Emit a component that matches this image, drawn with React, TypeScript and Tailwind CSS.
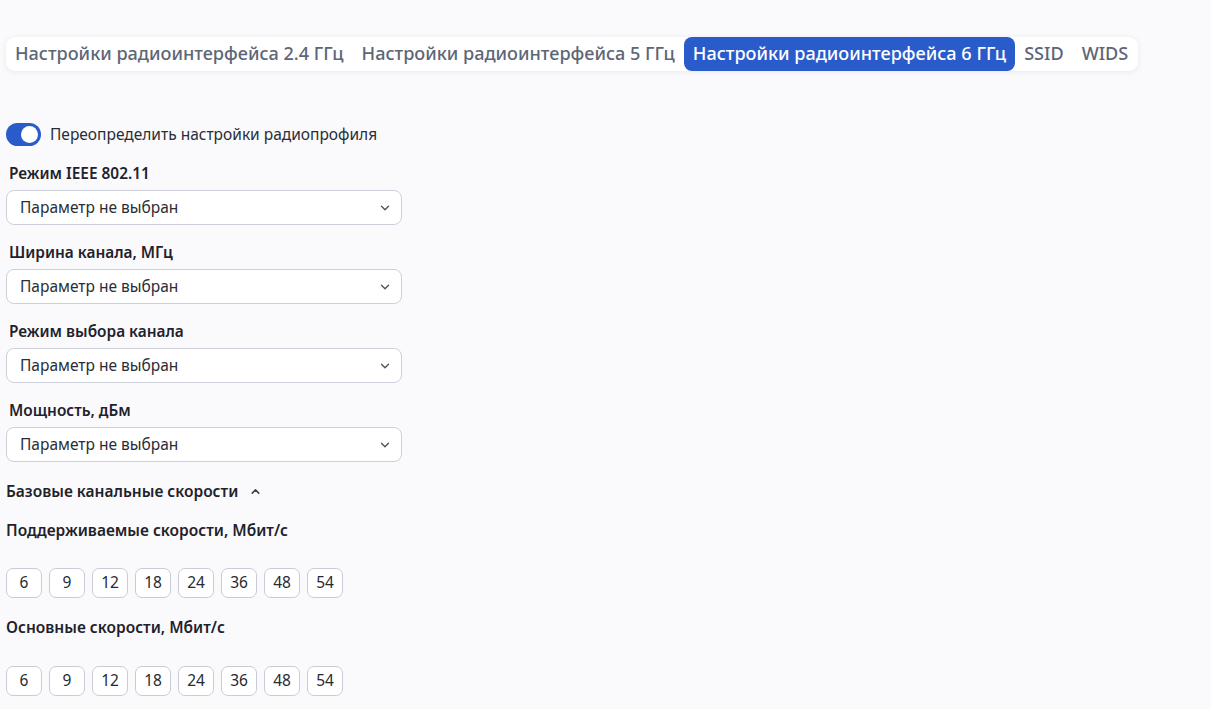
import React from "react";

const tabs = [
  "Настройки радиоинтерфейса 2.4 ГГц",
  "Настройки радиоинтерфейса 5 ГГц",
  "Настройки радиоинтерфейса 6 ГГц",
  "SSID",
  "WIDS",
];

const selects = [
  "Режим IEEE 802.11",
  "Ширина канала, МГц",
  "Режим выбора канала",
  "Мощность, дБм",
];

const rates = [6, 9, 12, 18, 24, 36, 48, 54];

function ChevronDown() {
  return (
    <svg width="14" height="14" viewBox="0 0 24 24" fill="none" stroke="#4b5563" strokeWidth="2.4" strokeLinecap="round" strokeLinejoin="round">
      <path d="M6 9l6 6 6-6" />
    </svg>
  );
}

function ChevronUp() {
  return (
    <svg width="13" height="13" viewBox="0 0 24 24" fill="none" stroke="#374151" strokeWidth="2.8" strokeLinecap="round" strokeLinejoin="round">
      <path d="M6 15l6-6 6 6" />
    </svg>
  );
}

function RateChips() {
  return (
    <div className="flex gap-[7px]">
      {rates.map((r) => (
        <div
          key={r}
          className="w-[36px] h-[30px] flex items-center justify-center rounded-[7px] border border-[#c9ccd6] bg-white text-[15.5px] text-[#272a33]"
        >
          {r}
        </div>
      ))}
    </div>
  );
}

export default function App() {
  return (
    <div
      className="min-h-[709px] bg-[#fafafc] pl-[6px] pt-[37px]"
      style={{ fontFamily: '"Noto Sans", "Open Sans", sans-serif' }}
    >
      <div className="inline-flex h-[34px] items-stretch rounded-[9px] bg-white pr-[1px] shadow-[0_1px_6px_rgba(30,40,80,0.08)]">
        {tabs.map((t, i) => (
          <div
            key={t}
            className={
              i === 2
                ? "flex items-center rounded-[8px] bg-[#2a5bcb] px-[9px] text-[18.1px] font-medium text-white"
                : "flex items-center px-[9px] text-[18.1px] font-medium text-[#5d6676]"
            }
          >
            {t}
          </div>
        ))}
      </div>

      <div className="mt-[52px] flex items-center gap-[9px]">
        <div className="relative h-[23px] w-[35px] rounded-full bg-[#2a5bcb]">
          <div className="absolute right-[3px] top-[3px] h-[17px] w-[17px] rounded-full bg-white" />
        </div>
        <span className="text-[15.5px] text-[#2a2d36]">Переопределить настройки радиопрофиля</span>
      </div>

      <div className="mt-[17px] flex flex-col gap-[17px]">
        {selects.map((s) => (
          <div key={s} className="flex flex-col">
            <div className="pl-[3px] text-[15.4px] font-semibold leading-[22px] text-[#1f222b]">{s}</div>
            <div className="mt-[5px] flex h-[35px] w-[396px] items-center justify-between rounded-[8px] border border-[#cdd0da] bg-white pl-[13px] pr-[9px]">
              <span className="text-[15.5px] text-[#2a2d36]">Параметр не выбран</span>
              <ChevronDown />
            </div>
          </div>
        ))}
      </div>

      <div className="mt-[18px] flex items-center gap-[11px]">
        <span className="text-[15.5px] font-semibold text-[#1f222b]">Базовые канальные скорости</span>
        <ChevronUp />
      </div>

      <div className="mt-[15px] text-[15.5px] font-semibold text-[#1f222b]">Поддерживаемые скорости, Мбит/с</div>
      <div className="mt-[26px]">
        <RateChips />
      </div>

      <div className="mt-[18px] text-[15.5px] font-semibold text-[#1f222b]">Основные скорости, Мбит/с</div>
      <div className="mt-[27px]">
        <RateChips />
      </div>
    </div>
  );
}
